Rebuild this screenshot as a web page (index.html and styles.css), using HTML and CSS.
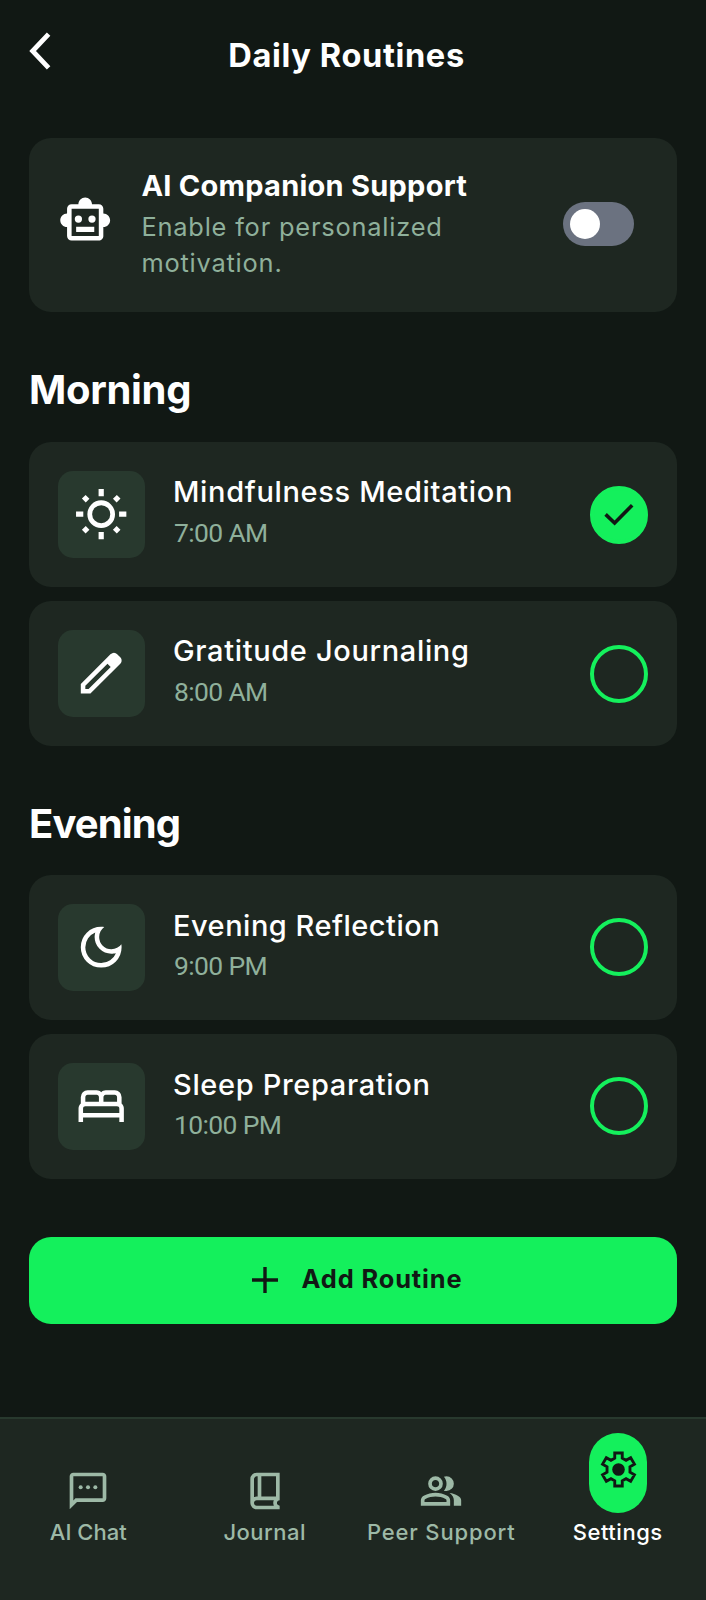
FILE: index.html
```html
<!DOCTYPE html>
<html lang="en">
<head>
<meta charset="utf-8">
<title>Daily Routines</title>
<link rel="stylesheet" href="styles.css">
</head>
<body>
<header class="header">
  <button class="back" aria-label="Back"><svg width="24" height="40" viewBox="0 0 24 40"><path d="M19.6 3.1 3.6 20l16 16.9" fill="none" stroke="currentColor" stroke-width="4.8"/></svg></button>
  <h1 class="title">Daily Routines</h1>
</header>

<main class="main">
  <section class="companion">
    <svg class="icon companion-icon" viewBox="0 0 24 24"><path fill-rule="evenodd" d="M20 9V7c0-1.1-.9-2-2-2h-3c0-1.66-1.34-3-3-3S9 3.34 9 5H6c-1.1 0-2 .9-2 2v2c-1.66 0-3 1.34-3 3s1.34 3 3 3v4c0 1.1.9 2 2 2h12c1.1 0 2-.9 2-2v-4c1.66 0 3-1.34 3-3s-1.34-3-3-3zm-2 10H6V7h12z"/><circle cx="9" cy="11.5" r="1.6"/><circle cx="15" cy="11.5" r="1.6"/><path d="M8 14.9h8v2.3H8z"/></svg>
    <div class="companion-text">
      <h2 class="companion-title">AI Companion Support</h2>
      <p class="companion-desc">Enable for personalized<br>motivation.</p>
    </div>
    <div class="toggle" role="switch" aria-checked="false"><span class="knob"></span></div>
  </section>

  <h2 class="heading">Morning</h2>
  <div class="list">
    <article class="card">
      <div class="tile"><svg class="icon" viewBox="0 0 24 24"><circle cx="12" cy="12" r="5.05" fill="none" stroke="currentColor" stroke-width="2.1"/><path fill="none" stroke="currentColor" stroke-width="2.3" d="M12 .9v3.2M12 19.9v3.2M.9 12h3.2M19.9 12h3.2M4.3 4.3l1.7 1.7M18 18l1.7 1.7M4.3 19.7 6 18M18 6l1.7-1.7"/></svg></div>
      <div class="info"><h3 class="name">Mindfulness Meditation</h3><p class="time">7:00 AM</p></div>
      <span class="check check-done"><svg width="30" height="23" viewBox="0 0 30 23"><path d="M1.6 11.4 10.6 20 28.2 2.2" fill="none" stroke="currentColor" stroke-width="3.6"/></svg></span>
    </article>
    <article class="card">
      <div class="tile"><svg class="icon" viewBox="0 0 24 24"><path fill-rule="evenodd" d="M5 19h1.425L16.2 9.225 14.775 7.8 5 17.575V19Zm-2 2v-4.25L16.2 3.575q.3-.275.6625-.425t.7625-.15q.4 0 .775.15t.65.45L20.425 5q.3.275.4375.65t.1375.75q0 .4-.1375.7625T20.425 7.825L7.25 21H3Z"/></svg></div>
      <div class="info"><h3 class="name">Gratitude Journaling</h3><p class="time">8:00 AM</p></div>
      <span class="check"></span>
    </article>
  </div>

  <h2 class="heading heading-evening">Evening</h2>
  <div class="list list-evening">
    <article class="card">
      <div class="tile"><svg class="icon" viewBox="0 0 24 24"><path fill-rule="evenodd" d="M12 21q-3.75 0-6.375-2.625T3 12q0-3.75 2.625-6.375T12 3q.35 0 .6875.025t.6625.075q-1.025.725-1.6375 1.8875T11.1 7.5q0 2.25 1.575 3.825T16.5 12.9q1.375 0 2.525-.6125T20.9 10.65q.05.325.075.6625T21 12q0 3.75-2.625 6.375T12 21Zm0-2q2.2 0 3.95-1.2125T18.5 14.625q-.5.125-1 .2t-1 .075q-3.075 0-5.2375-2.1625T9.1 7.5q0-.5.075-1t.2-1Q7.425 6.3 6.2125 8.05T5 12q0 2.9 2.05 4.95T12 19Z"/></svg></div>
      <div class="info"><h3 class="name name-reflection">Evening Reflection</h3><p class="time">9:00 PM</p></div>
      <span class="check"></span>
    </article>
    <article class="card">
      <div class="tile"><svg class="icon" viewBox="0 0 24 24"><path fill-rule="evenodd" d="M2 19v-6q0-.675.275-1.225T3 10.8V8q0-1.25.875-2.125T6 5h4q.575 0 1.075.2125T12 5.8q.425-.375.925-.5875T14 5h4q1.25 0 2.125.875T21 8v2.8q.45.425.725.975T22 13v6h-2v-2H4v2H2Zm11-9h6V8q0-.425-.2875-.7125T18 7h-4q-.425 0-.7125.2875T13 8v2Zm-8 0h6V8q0-.425-.2875-.7125T10 7H6q-.425 0-.7125.2875T5 8v2Zm-1 5h16v-2q0-.425-.2875-.7125T19 12H5q-.425 0-.7125.2875T4 13v2Z"/></svg></div>
      <div class="info"><h3 class="name">Sleep Preparation</h3><p class="time">10:00 PM</p></div>
      <span class="check"></span>
    </article>
  </div>

  <button class="add"><svg width="26" height="26" viewBox="0 0 26 26"><path d="M13 0v26M0 13h26" stroke="currentColor" stroke-width="3.4"/></svg><span class="add-label">Add Routine</span></button>
</main>

<nav class="nav">
  <a class="nav-item"><svg class="nav-icon" viewBox="0 0 24 24"><path fill-rule="evenodd" d="M2 22V4q0-.825.5875-1.4125T4 2h16q.825 0 1.4125.5875T22 4v12q0 .825-.5875 1.4125T20 18H6l-4 4Zm2-4.875L5.15 16H20V4H4v13.125Z"/><circle cx="8" cy="10" r="1.1"/><circle cx="12" cy="10" r="1.1"/><circle cx="16" cy="10" r="1.1"/></svg><span class="nav-label nav-label-chat">AI Chat</span></a>
  <a class="nav-item"><svg class="nav-icon" viewBox="0 0 24 24"><path fill-rule="evenodd" d="M6 15.325q.35-.175.725-.25T7.5 15H8V4h-.5q-.625 0-1.0625.4375T6 5.5v9.825ZM10 15h8V4h-8v11ZM7.5 22q-1.45 0-2.475-1.025T4 18.5v-13q0-1.45 1.025-2.475T7.5 2H20v15q-.625 0-1.0625.4375T18.5 18.5q0 .625.4375 1.0625T20 20v2H7.5Zm0-2h9.325q-.15-.35-.2375-.7125T16.5 18.5q0-.4.075-.775t.25-.725H7.5q-.65 0-1.075.4375T6 18.5q0 .65.425 1.075T7.5 20Z"/></svg><span class="nav-label">Journal</span></a>
  <a class="nav-item"><svg class="nav-icon" viewBox="0 0 24 24"><path fill-rule="evenodd" d="M1 20v-2.8q0-.85.4375-1.5625T2.6 14.55q1.55-.775 3.15-1.1625T9 13t3.25.3875 3.15 1.1625q.725.375 1.1625 1.0875T17 17.2V20H1Zm18 0v-3q0-1.1-.6125-2.1125T16.65 13.15q1.275.15 2.4.5125t2.1.8875q.9.5 1.375 1.1125T23 17v3h-4ZM9 12q-1.65 0-2.825-1.175T5 8t1.175-2.825T9 4t2.825 1.175T13 8t-1.175 2.825T9 12Zm10-4q0 1.65-1.175 2.825T15 12q-.275 0-.7-.0625T13.6 11.8q.675-.8 1.0375-1.775T15 8t-.3625-2.025T13.6 4.2q.35-.125.7-.1625T15 4q1.65 0 2.825 1.175T19 8ZM3 18h12v-.8q0-.275-.1375-.5T14.5 16.35q-1.35-.675-2.725-1.0125T9 15t-2.775.3375T3.5 16.35q-.225.125-.3625.35T3 17.2V18Zm6-8q.825 0 1.4125-.5875T11 8t-.5875-1.4125T9 6t-1.4125.5875T7 8t.5875 1.4125T9 10Z"/></svg><span class="nav-label nav-label-peer">Peer Support</span></a>
  <a class="nav-item nav-item-active"><span class="pill"><svg class="gear" viewBox="0 0 24 24"><path fill="none" stroke="currentColor" stroke-width="1.6" d="M9.9 2.8h4.2v2.9l2.1 1.2 2.6-1.5 2.1 3.6-2.5 1.5v3l2.5 1.5-2.1 3.6-2.6-1.5-2.1 1.2v2.9H9.9v-2.9l-2.1-1.2-2.6 1.5L3.100 15l2.500-1.500v-3L3.100 9l2.100-3.600 2.600 1.500 2.100-1.200Z"/><circle cx="12" cy="12" r="3.500"/></svg></span><span class="nav-label">Settings</span></a>
</nav>
</body>
</html>
```
FILE: styles.css
```css
* { box-sizing: border-box; }

body {
  margin: 0;
  min-height: 1600px;
  display: flex;
  flex-direction: column;
  background: #111814;
  color: #fff;
  font-family: Inter, "Liberation Sans", sans-serif;
}

h1, h2, h3, p { margin: 0; }

button {
  border: 0;
  padding: 0;
  background: none;
  color: inherit;
  font-family: inherit;
}

svg { display: block; fill: currentColor; flex: none; }

.header {
  display: grid;
  grid-template-columns: 72px 1fr;
  align-items: center;
  height: 110px;
  padding: 0 114px 0 29px;
}

.back { display: flex; padding-bottom: 8px; }

.title {
  font-size: 32.6px;
  line-height: 40px;
  font-weight: 700;
  letter-spacing: .63px;
  text-align: center;
}

.main {
  flex: 1;
  padding: 27.5px 29px 0;
}

.icon { width: 54.4px; height: 54.4px; }

.companion {
  display: flex;
  align-items: flex-start;
  height: 174px;
  padding: 25px 43px 0 29px;
  border-radius: 22px;
  background: #1e2721;
}

.companion-icon { margin-top: 30.5px; }
.companion-text { flex: 1; padding-left: 29px; }

.companion-title {
  font-size: 29px;
  line-height: 45px;
  font-weight: 700;
  letter-spacing: .25px;
}

.companion-desc {
  padding-top: 1px;
  font-size: 25.4px;
  line-height: 36.3px;
  letter-spacing: .8px;
  color: #8fb09b;
}

.toggle {
  display: flex;
  width: 71px;
  height: 44px;
  margin-top: 39.5px;
  padding: 7px;
  border-radius: 22px;
  background: #6b7280;
}

.knob {
  width: 30px;
  height: 30px;
  border-radius: 50%;
  background: #fff;
}

.heading {
  margin: 53.5px 0 27px;
  font-size: 40px;
  line-height: 50px;
  font-weight: 700;
  letter-spacing: -.3px;
}

.heading-evening { margin: 53px 0 25.5px; letter-spacing: -.9px; }

.list { display: flex; flex-direction: column; gap: 14px; }

.card {
  display: flex;
  align-items: center;
  height: 145px;
  padding: 0 29px;
  border-radius: 22px;
  background: #1e2721;
}

.tile {
  display: flex;
  align-items: center;
  justify-content: center;
  width: 87px;
  height: 87px;
  border-radius: 15px;
  background: #28392e;
}

.info { flex: 1; padding: 0 0 7px 28px; }
.list-evening .info { padding-bottom: 5px; }

.name {
  font-size: 29px;
  line-height: 43.5px;
  font-weight: 500;
  letter-spacing: .65px;
}

.name-reflection { letter-spacing: .5px; }

.time {
  padding-left: 1px;
  font-family: Roboto, Inter, sans-serif;
  font-size: 26.5px;
  line-height: 38.5px;
  letter-spacing: -.65px;
  color: #8fb09b;
}

.check {
  width: 58px;
  height: 58px;
  border: 4px solid #14f05c;
  border-radius: 50%;
}

.check-done {
  display: flex;
  align-items: center;
  justify-content: center;
  background: #14f05c;
  color: #111814;
}

.add {
  display: flex;
  align-items: center;
  width: 100%;
  height: 87px;
  margin-top: 58px;
  padding-left: 223px;
  border-radius: 22px;
  background: #14f05c;
  color: #111814;
}

.add-label {
  padding: 0 0 3px 23.5px;
  font-size: 25.4px;
  line-height: 34px;
  font-weight: 700;
  letter-spacing: .89px;
}

.nav {
  display: grid;
  grid-template-columns: repeat(4, 1fr);
  height: 183px;
  padding-bottom: 51px;
  border-top: 2px solid #28392e;
  background: #1e2721;
  color: #9db9a6;
}

.nav-item {
  display: flex;
  flex-direction: column;
  align-items: center;
  justify-content: flex-end;
}

.nav-item-active { color: #fff; }
.nav-icon { width: 44px; height: 44px; }

.nav-label {
  margin-top: 3px;
  font-size: 22px;
  line-height: 33px;
  font-weight: 500;
  letter-spacing: .5px;
}

.nav-label-chat { letter-spacing: 0; }
.nav-label-peer { letter-spacing: .85px; }

.pill {
  display: flex;
  align-items: center;
  justify-content: center;
  width: 58px;
  height: 80px;
  padding: 0 0 7px 1px;
  border-radius: 29px;
  background: #14f05c;
  color: #111814;
}

.gear { width: 43px; height: 43px; }
```
